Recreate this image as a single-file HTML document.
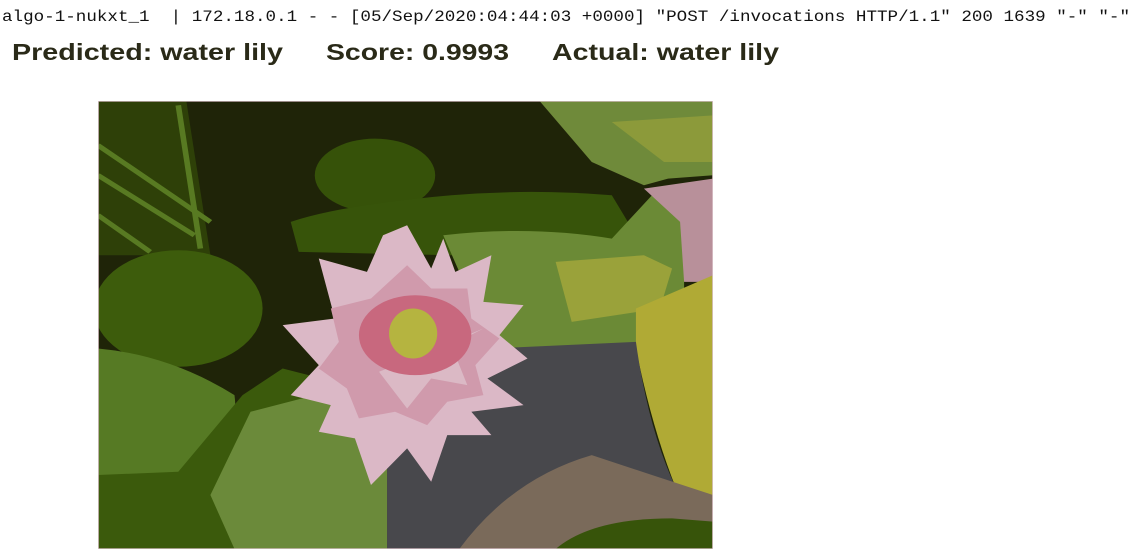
<!DOCTYPE html>
<html><head><meta charset="utf-8"><style>
html,body{margin:0;padding:0;background:#fff;width:1138px;height:555px;overflow:hidden}
</style></head><body>
<svg width="1138" height="555" viewBox="0 0 1138 555" xmlns="http://www.w3.org/2000/svg">
<text x="2" y="21" font-family="Liberation Mono, monospace" font-size="16" fill="#111" textLength="1128" lengthAdjust="spacingAndGlyphs" xml:space="preserve">algo-1-nukxt_1  | 172.18.0.1 - - [05/Sep/2020:04:44:03 +0000] "POST /invocations HTTP/1.1" 200 1639 "-" "-"</text>
<g font-family="Liberation Sans, sans-serif" font-weight="bold" font-size="23" fill="#2a2a18">
<text x="12" y="60" textLength="271" lengthAdjust="spacingAndGlyphs">Predicted: water lily</text>
<text x="326" y="60" textLength="183" lengthAdjust="spacingAndGlyphs">Score: 0.9993</text>
<text x="552" y="60" textLength="227" lengthAdjust="spacingAndGlyphs">Actual: water lily</text>
</g>
<svg x="98" y="101" width="615" height="448" viewBox="20 17 1532 1345" preserveAspectRatio="none">
<rect x="20" y="17" width="1532" height="1345" fill="#1f2408"/>
<path d="M20 17 L240 17 L300 480 L20 480 Z" fill="#2e4008"/>
<path d="M20 150 L300 380 M20 240 L260 420 M20 360 L150 470 M220 30 L275 460" stroke="#587a22" stroke-width="14" fill="none"/>
<path d="M1120 17 L1552 17 L1552 240 L1440 250 L1380 270 L1250 200 Z" fill="#6f8a3a"/>
<path d="M1300 80 L1552 60 L1552 200 L1430 200 Z" fill="#8c9a3a"/>
<ellipse cx="710" cy="240" rx="150" ry="110" fill="#365209"/>
<path d="M500 380 Q620 330 900 300 Q1100 280 1300 300 L1380 460 L900 480 L520 470 Z" fill="#37540a"/>
<path d="M880 420 Q1100 390 1300 430 L1400 300 L1480 320 L1480 740 L1380 760 L1040 760 L960 640 Z" fill="#6b8a36"/>
<path d="M1160 500 L1380 480 L1450 520 L1420 640 L1200 680 Z" fill="#9aa23a"/>
<path d="M1380 280 L1552 250 L1552 560 L1480 560 L1470 380 Z" fill="#b8909a"/>
<path d="M1360 640 L1552 540 L1552 1260 L1460 1180 Q1400 1000 1360 760 Z" fill="#b0aa35"/>
<path d="M1000 760 L1360 740 Q1390 1000 1460 1180 L1380 1362 L740 1362 L740 1000 Z" fill="#48484c"/>
<path d="M920 1362 Q1050 1150 1250 1080 L1400 1140 L1552 1200 L1552 1362 Z" fill="#7a6a5a"/>
<path d="M1160 1362 Q1250 1270 1450 1270 L1552 1280 L1552 1362 Z" fill="#37540a"/>
<ellipse cx="220" cy="640" rx="210" ry="175" fill="#3d5c0c"/>
<path d="M20 760 Q200 780 360 900 Q380 1080 200 1140 L20 1140 Z" fill="#567a24"/>
<path d="M20 1140 L220 1130 L380 900 L480 820 L740 900 L740 1362 L20 1362 Z" fill="#3b5a0c"/>
<path d="M400 950 L560 900 L740 960 L740 1362 L360 1362 L300 1200 Z" fill="#6b8a3a"/>
<g transform="translate(790 760)">
<polygon fill="#dbb8c6" points="0,-370 60,-240 90,-330 120,-230 210,-280 190,-140 290,-130 230,-40 300,30 200,90 290,170 160,190 210,260 100,260 60,400 0,300 -90,410 -130,270 -220,250 -190,170 -290,140 -220,50 -310,-70 -180,-90 -220,-270 -100,-230 -60,-340"/>
<polygon fill="#d09aac" points="0,-250 60,-180 150,-180 160,-90 230,-30 170,50 190,140 100,160 50,230 -30,190 -120,210 -150,120 -220,60 -170,-20 -190,-120 -90,-150"/>
<polygon fill="#dcbcc8" points="-70,70 0,180 60,90 150,110 110,-10 190,-60" opacity="0.9"/>
<ellipse cx="20" cy="-40" rx="140" ry="120" fill="#c8687e"/>
<ellipse cx="15" cy="-45" rx="60" ry="75" fill="#b5b440"/>
</g>
<rect x="20" y="17" width="1532" height="1345" fill="none" stroke="#d8c0c8" stroke-width="4"/>
</svg>
</svg>
</body></html>
